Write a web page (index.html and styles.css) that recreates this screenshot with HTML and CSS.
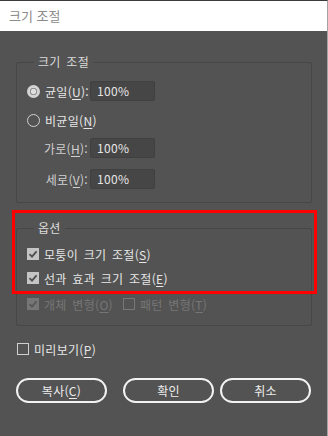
FILE: index.html
```html
<!DOCTYPE html>
<html lang="ko">

<head>
  <meta charset="UTF-8">
  <meta name="viewport" content="width=device-width, initial-scale=1.0">
  <title>크기 조절</title>
  <link rel="stylesheet" href="styles.css">
</head>

<body>
  <div class="window">
    <div class="titlebar">크기 조절</div>

    <div class="content">
      <!-- 크기 조절 그룹 -->
      <fieldset class="group scale-group">
        <legend>크기 조절</legend>

        <div class="field-row first">
          <label class="radio-label"><span class="radio checked"></span>균일(<u>U</u>):</label>
          <div class="num-input">100%</div>
        </div>

        <div class="field-row second">
          <label class="radio-label"><span class="radio"></span>비균일(<u>N</u>)</label>
        </div>

        <div class="field-row third">
          <label class="side-label">가로(<u>H</u>):</label>
          <div class="num-input">100%</div>
        </div>

        <div class="field-row fourth">
          <label class="side-label">세로(<u>V</u>):</label>
          <div class="num-input">100%</div>
        </div>
      </fieldset>

      <!-- 옵션 그룹 -->
      <fieldset class="group options-group">
        <legend>옵션</legend>

        <label class="check-row">
          <span class="checkbox checked">
            <svg viewBox="0 0 12 12"><polyline points="2.5,6.2 5,8.6 9.6,3.4" /></svg>
          </span>
          모퉁이 크기 조절(<u>S</u>)
        </label>

        <label class="check-row">
          <span class="checkbox checked">
            <svg viewBox="0 0 12 12"><polyline points="2.5,6.2 5,8.6 9.6,3.4" /></svg>
          </span>
          선과 효과 크기 조절(<u>E</u>)
        </label>

        <div class="check-row disabled">
          <span class="checkbox checked">
            <svg viewBox="0 0 12 12"><polyline points="2.5,6.2 5,8.6 9.6,3.4" /></svg>
          </span>
          개체 변형(<u>O</u>)
          <span class="checkbox pattern-box"></span>
          패턴 변형(<u>T</u>)
        </div>
      </fieldset>

      <label class="check-row preview">
        <span class="checkbox"></span>
        미리보기(<u>P</u>)
      </label>

      <div class="buttons">
        <button class="pill-btn">복사(<u>C</u>)</button>
        <button class="pill-btn ok-btn">확인</button>
        <button class="pill-btn cancel-btn">취소</button>
      </div>
    </div>

    <!-- 강조 표시 -->
    <div class="highlight"></div>
  </div>
</body>

</html>
```

FILE: styles.css
```css
* {
  margin: 0;
  padding: 0;
  box-sizing: border-box;
}

body {
  font-family: "Noto Sans CJK KR", "Noto Sans", sans-serif;
  font-size: 12px;
  background: #535353;
  width: 328px;
  height: 436px;
  overflow: hidden;
}

u {
  text-decoration: underline;
  text-underline-offset: 2px;
}

.window {
  position: relative;
  width: 328px;
  height: 436px;
  background: #535353;
  border-top: 1px solid #3a3a3a;
  border-right: 1px solid #a3a3a3;
  color: #e6e6e6;
}

.titlebar {
  height: 30px;
  background: #ffffff;
  color: #8a8a8a;
  font-size: 13px;
  line-height: 30px;
  padding-left: 9px;
}

.content {
  padding: 0 15px 0 16px;
  letter-spacing: 0.3px;
  word-spacing: 2px;
}

/* 그룹 상자 */
.group {
  border: 1px solid #474747;
  border-radius: 2px;
  min-width: 0;
}

.group legend {
  margin-left: 7px;
  padding: 0 4px;
  height: 16px;
  line-height: 16px;
  color: #dcdcdc;
}

.scale-group {
  margin-top: 23px;
  padding: 11px 10px 13px 10px;
}

.field-row {
  display: flex;
  align-items: center;
  height: 20px;
}

.field-row.second {
  margin-top: 9px;
}

.field-row.third {
  margin-top: 8px;
}

.field-row.fourth {
  margin-top: 11px;
}

.radio-label {
  display: flex;
  align-items: center;
  width: 63px;
  white-space: nowrap;
}

.side-label {
  width: 61px;
  text-align: right;
  color: #d0d0d0;
  margin-right: 2px;
}

.radio {
  display: inline-block;
  width: 13px;
  height: 13px;
  border-radius: 50%;
  border: 1px solid #d0d0d0;
  margin-right: 5px;
  flex-shrink: 0;
}

.radio.checked {
  border: none;
  background: radial-gradient(circle, #dedede 0 2.5px, #8f8f8f 3px 3.5px, #d4d4d4 4px);
}

.num-input {
  width: 65px;
  height: 20px;
  background: #464646;
  border: 1px solid #404040;
  border-radius: 2px;
  line-height: 18px;
  padding-left: 6px;
  color: #e6e6e6;
}

/* 옵션 */
.options-group {
  margin-top: 17px;
  padding: 9px 10px 12px 10px;
}

.check-row {
  display: flex;
  align-items: center;
  height: 18px;
  white-space: nowrap;
}

.options-group .check-row + .check-row {
  margin-top: 6px;
}

.options-group .check-row.disabled {
  margin-top: 8px;
}

.checkbox {
  display: inline-flex;
  width: 12px;
  height: 12px;
  margin-right: 5px;
  border: 1px solid #d0d0d0;
  flex-shrink: 0;
}

.checkbox.checked {
  border: none;
  background: #c4c4c4;
}

.checkbox svg {
  width: 12px;
  height: 12px;
}

.checkbox polyline {
  fill: none;
  stroke: #4e4e4e;
  stroke-width: 1.8;
}

.disabled {
  color: #767676;
}

.disabled .checkbox {
  border-color: #777777;
}

.disabled .checkbox.checked {
  background: #767676;
}

.disabled .checkbox polyline {
  stroke: #575757;
}

.pattern-box {
  margin-left: 10px;
}

.preview {
  margin-top: 14px;
  padding-left: 1px;
}

/* 버튼 */
.buttons {
  display: flex;
  margin-top: 20px;
}

.pill-btn {
  width: 91px;
  height: 25px;
  border: 2px solid #f2f2f2;
  border-radius: 13px;
  background: transparent;
  color: #ececec;
  font-family: inherit;
  font-size: 12px;
  letter-spacing: 0.3px;
}

.ok-btn {
  margin-left: 16px;
}

.cancel-btn {
  margin-left: 6px;
}

.highlight {
  position: absolute;
  left: 12px;
  top: 209px;
  width: 305px;
  height: 84px;
  border: 3px solid #ff0000;
}
```
